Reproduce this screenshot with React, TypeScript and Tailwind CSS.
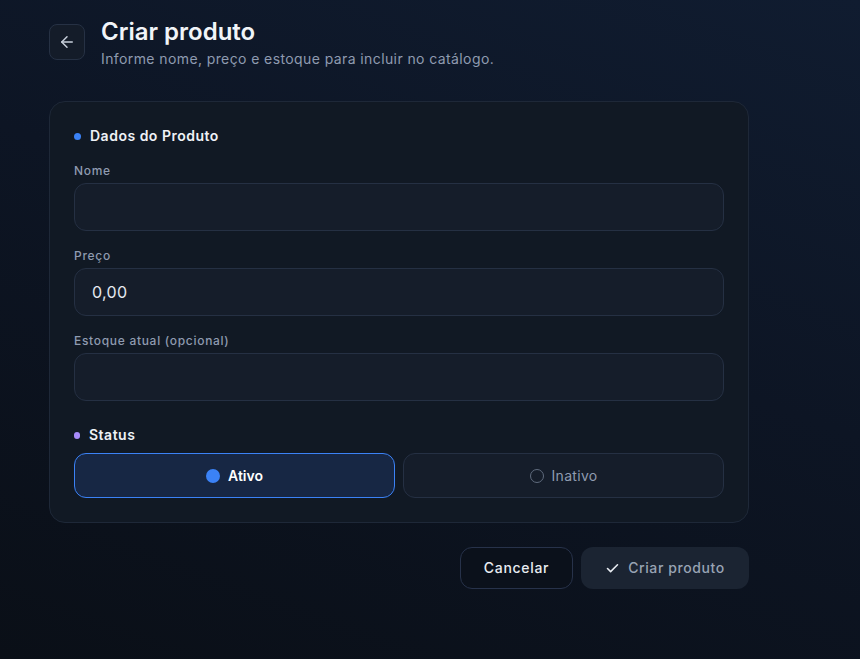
import React from "react";
import { ArrowLeft, Check } from "lucide-react";

function Field({ label, value }: { label: string; value?: string }) {
  return (
    <div className="flex flex-col">
      <label className="mb-1 text-xs leading-4 font-medium tracking-[0.7px] text-[#8f9bb0]">{label}</label>
      <div className="flex h-12 items-center rounded-xl border border-[#253043] bg-[#151d2a] px-[17px] text-base tracking-[0.3px] text-[#e5e9f0]">
        {value}
      </div>
    </div>
  );
}

export default function App() {
  return (
    <div
      className="min-h-[659px] w-full bg-[linear-gradient(200deg,#101c30_0%,#0d1524_45%,#0a0f17_100%)] pl-[49px] pt-4 text-white"
      style={{ fontFamily: "Inter, 'Noto Sans', sans-serif" }}
    >
      <div className="w-[700px]">
        <div className="flex items-start gap-4">
          <button className="mt-2 flex h-9 w-9 items-center justify-center rounded-lg border border-[#263144] bg-[#141c29] text-[#c7cfdb]">
            <ArrowLeft size={18} strokeWidth={2} />
          </button>
          <div className="flex flex-col">
            <h1 className="text-2xl leading-8 font-semibold text-[#f1f4f8]">Criar produto</h1>
            <p className="mt-[1px] text-sm leading-5 tracking-[0.4px] text-[#8f9bb0]">
              Informe nome, preço e estoque para incluir no catálogo.
            </p>
          </div>
        </div>

        <div className="mt-[32px] rounded-2xl border border-[#1e2838] bg-[#111924] p-6">
          <div className="flex flex-col gap-[17px]">
            <div className="flex h-5 items-center gap-[9px]">
              <span className="h-[7px] w-[7px] rounded-full bg-[#3b82f6]" />
              <span className="text-sm font-semibold tracking-[0.5px] text-[#eef1f6]">Dados do Produto</span>
            </div>
            <Field label="Nome" />
            <Field label="Preço" value="0,00" />
            <Field label="Estoque atual (opcional)" />
          </div>

          <div className="mt-6 flex h-5 items-center gap-[9px]">
            <span className="h-[7px] w-[6px] rounded-full bg-[#a78bfa]" />
            <span className="text-sm font-semibold tracking-[0.5px] text-[#eef1f6]">Status</span>
          </div>
          <div className="mt-2 grid grid-cols-2 gap-2">
            <button className="flex h-[45px] items-center justify-center gap-2 rounded-xl border border-[#3b82f6] bg-[#172744] text-sm font-semibold text-white">
              <span className="h-[14px] w-[14px] rounded-full bg-[#3b82f6]" />
              Ativo
            </button>
            <button className="flex h-[45px] items-center justify-center gap-2 rounded-xl border border-[#253043] bg-[#151d2a] text-sm tracking-[0.3px] text-[#8f9bb0]">
              <span className="h-[14px] w-[14px] rounded-full border-[1.5px] border-[#5f6b7d]" />
              Inativo
            </button>
          </div>
        </div>

        <div className="mt-6 flex justify-end gap-2">
          <button className="flex h-[42px] w-[113px] items-center justify-center rounded-xl border border-[#27324a] bg-[#0b111b] text-sm font-medium tracking-[0.7px] text-[#e8ecf2]">
            Cancelar
          </button>
          <button className="flex h-[42px] w-[168px] items-center justify-center gap-2 rounded-xl bg-[#1b2432] text-sm font-medium tracking-[0.6px] text-[#98a3b4]">
            <Check size={15} strokeWidth={2.5} className="text-[#e8ecf2]" />
            Criar produto
          </button>
        </div>
      </div>
    </div>
  );
}
